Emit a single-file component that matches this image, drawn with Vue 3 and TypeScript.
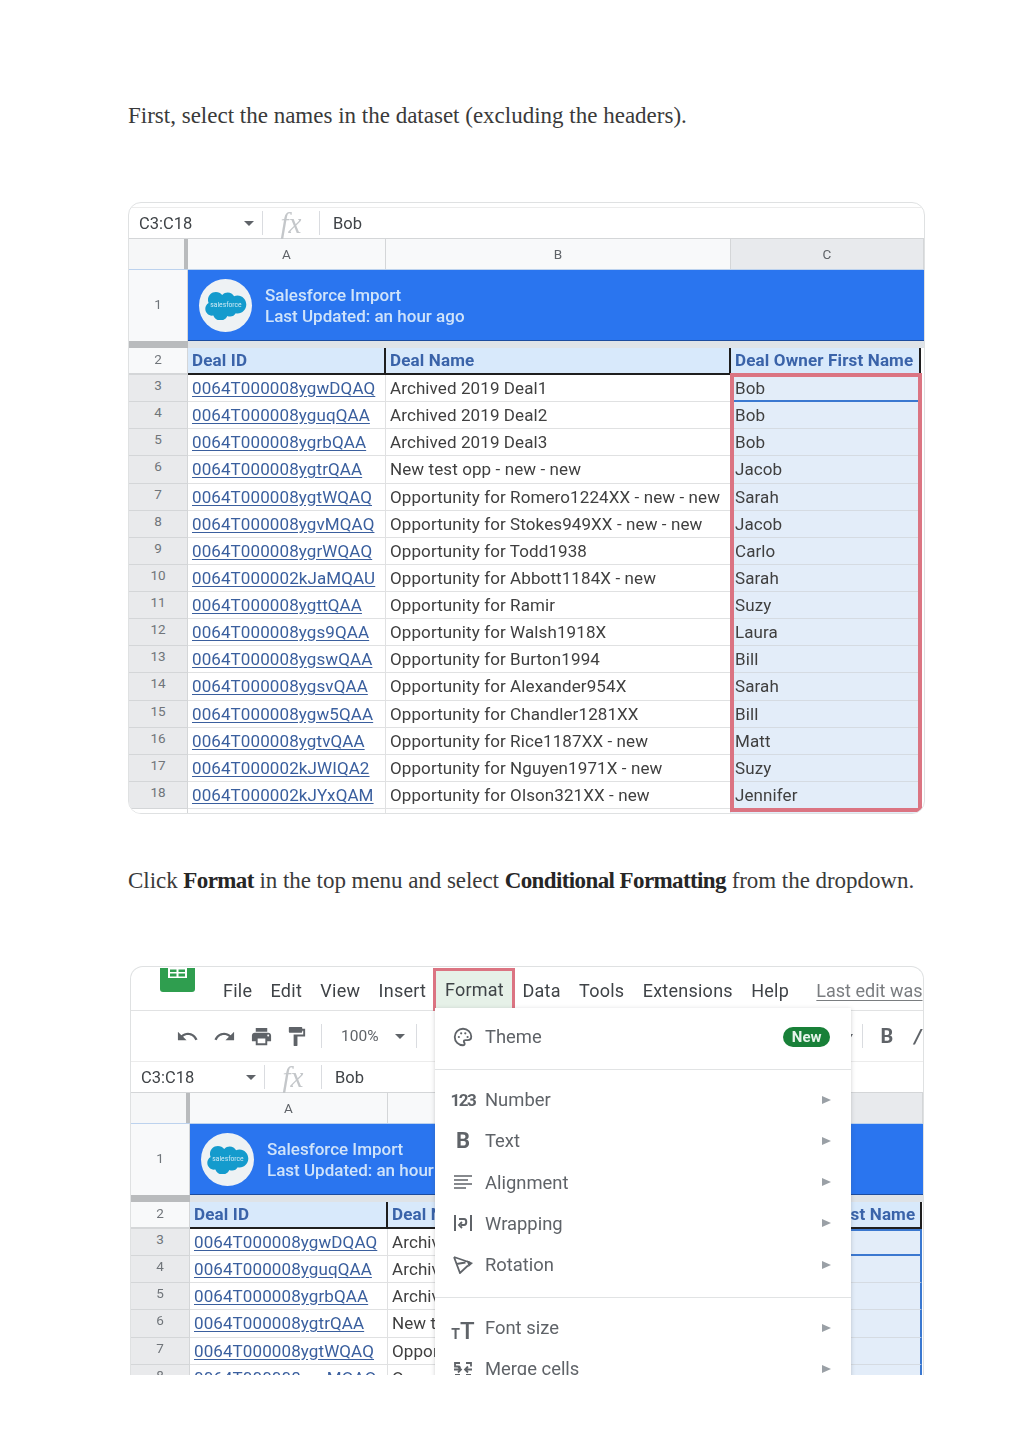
<script setup lang="ts">
interface Row { n: number; id: string; name: string; owner: string }
interface Seg { t: string; b?: boolean }
interface Section { key: string; copy: Seg[]; rows: Row[]; app: boolean }
interface MenuItem { label: string; icon: string; sepBefore?: boolean; arrow: boolean; badge?: string }

const raw: [string, string, string][] = [
  ['0064T000008ygwDQAQ', 'Archived 2019 Deal1', 'Bob'],
  ['0064T000008yguqQAA', 'Archived 2019 Deal2', 'Bob'],
  ['0064T000008ygrbQAA', 'Archived 2019 Deal3', 'Bob'],
  ['0064T000008ygtrQAA', 'New test opp - new - new', 'Jacob'],
  ['0064T000008ygtWQAQ', 'Opportunity for Romero1224XX - new - new', 'Sarah'],
  ['0064T000008ygvMQAQ', 'Opportunity for Stokes949XX - new - new', 'Jacob'],
  ['0064T000008ygrWQAQ', 'Opportunity for Todd1938', 'Carlo'],
  ['0064T000002kJaMQAU', 'Opportunity for Abbott1184X - new', 'Sarah'],
  ['0064T000008ygttQAA', 'Opportunity for Ramir', 'Suzy'],
  ['0064T000008ygs9QAA', 'Opportunity for Walsh1918X', 'Laura'],
  ['0064T000008ygswQAA', 'Opportunity for Burton1994', 'Bill'],
  ['0064T000008ygsvQAA', 'Opportunity for Alexander954X', 'Sarah'],
  ['0064T000008ygw5QAA', 'Opportunity for Chandler1281XX', 'Bill'],
  ['0064T000008ygtvQAA', 'Opportunity for Rice1187XX - new', 'Matt'],
  ['0064T000002kJWIQA2', 'Opportunity for Nguyen1971X - new', 'Suzy'],
  ['0064T000002kJYxQAM', 'Opportunity for Olson321XX - new', 'Jennifer'],
]
const allRows: Row[] = raw.map((r, i) => ({ n: i + 3, id: r[0], name: r[1], owner: r[2] }))

const sections: Section[] = [
  {
    key: 'select',
    copy: [{ t: 'First, select the names in the dataset (excluding the headers).' }],
    rows: allRows,
    app: false,
  },
  {
    key: 'format',
    copy: [
      { t: 'Click ' },
      { t: 'Format', b: true },
      { t: ' in the top menu and select ' },
      { t: 'Conditional Formatting', b: true },
      { t: ' from the dropdown.' },
    ],
    rows: allRows.slice(0, 6),
    app: true,
  },
]

const menuNames = ['File', 'Edit', 'View', 'Insert']
const menuNamesAfter = ['Data', 'Tools', 'Extensions', 'Help']

const menuItems: MenuItem[] = [
  { label: 'Theme', icon: 'palette', arrow: false, badge: 'New' },
  { label: 'Number', icon: 'num', arrow: true, sepBefore: true },
  { label: 'Text', icon: 'bold', arrow: true },
  { label: 'Alignment', icon: 'align', arrow: true },
  { label: 'Wrapping', icon: 'wrap', arrow: true },
  { label: 'Rotation', icon: 'rotate', arrow: true },
  { label: 'Font size', icon: 'size', arrow: true, sepBefore: true },
  { label: 'Merge cells', icon: 'merge', arrow: true },
]
</script>

<template>
  <main class="article">
    <section v-for="s in sections" :key="s.key" class="step" :class="'step-' + s.key">
      <p class="copy">
        <template v-for="(seg, i) in s.copy" :key="i">
          <strong v-if="seg.b">{{ seg.t }}</strong>
          <template v-else>{{ seg.t }}</template>
        </template>
      </p>

      <div class="card" :class="s.app ? 'card-app' : 'card-plain'">
        <template v-if="s.app">
          <div class="menubar">
            <div class="sheets-logo">
              <svg width="35" height="24" viewBox="0 0 35 24">
                <rect x="0" y="-8" width="35" height="32" rx="3" fill="#2f9e4f" />
                <path d="M8 0h19v10H8z" fill="#fff" />
                <path d="M10 1.500h6.500v2.500H10zM18.500 1.500H25v2.500h-6.500zM10 5.500h6.500v3H10zM18.500 5.500H25v3h-6.500z" fill="#2f9e4f" />
              </svg>
            </div>
            <span v-for="m in menuNames" :key="m" class="menu-name">{{ m }}</span>
            <span class="menu-name menu-active">Format</span>
            <span v-for="m in menuNamesAfter" :key="m" class="menu-name">{{ m }}</span>
            <span class="last-edit">Last edit was</span>
          </div>
          <div class="toolbar">
            <svg class="tool" viewBox="0 0 24 24"><path d="M12.5 8c-2.65 0-5.05.99-6.9 2.6L2 7v9h9l-3.62-3.62c1.39-1.16 3.16-1.88 5.12-1.88 3.54 0 6.55 2.31 7.6 5.5l2.37-.78C21.08 11.03 17.15 8 12.5 8z" /></svg>
            <svg class="tool" viewBox="0 0 24 24"><path d="M18.4 10.6C16.55 8.99 14.15 8 11.5 8c-4.65 0-8.58 3.03-9.96 7.22L3.9 16c1.05-3.19 4.05-5.5 7.6-5.5 1.95 0 3.73.72 5.12 1.88L13 16h9V7l-3.6 3.6z" /></svg>
            <svg class="tool" viewBox="0 0 24 24"><path d="M19 8H5c-1.66 0-3 1.34-3 3v6h4v4h12v-4h4v-6c0-1.66-1.34-3-3-3zm-3 11H8v-5h8v5zm3-7c-.55 0-1-.45-1-1s.45-1 1-1 1 .45 1 1-.45 1-1 1zm-1-9H6v4h12V3z" /></svg>
            <svg class="tool tool-paint" viewBox="0 0 24 24"><path d="M18 4V3c0-.55-.45-1-1-1H5c-.55 0-1 .45-1 1v4c0 .55.45 1 1 1h12c.55 0 1-.45 1-1V6h1v4H9v11c0 .55.45 1 1 1h2c.55 0 1-.45 1-1v-9h8V4h-3z" /></svg>
            <i class="vsep tool-sep-a"></i>
            <span class="zoom-level">100%</span>
            <i class="caret zoom-caret"></i>
            <i class="vsep tool-sep-b"></i>
            <i class="caret tail-caret"></i>
            <i class="vsep tool-sep-c"></i>
            <b class="tool-bold">B</b>
            <span class="tool-italic">/</span>
          </div>
        </template>

        <div class="formula">
          <span class="range">C3:C18</span>
          <i class="caret range-caret"></i>
          <i class="vsep"></i>
          <span class="fx">fx</span>
          <i class="vsep"></i>
          <span class="value">Bob</span>
        </div>

        <div class="grid-row col-heads">
          <div class="corner"></div>
          <div class="col-head">A</div>
          <div class="col-head">B</div>
          <div class="col-head col-selected">C</div>
        </div>

        <div class="grid-row banner-row">
          <div class="row-num num-plain banner-num">1</div>
          <div class="banner">
            <div class="logo">
              <svg width="42" height="29" viewBox="0 0 40 28">
                <path d="M16.600 3.600c1.300-1.400 3.100-2.200 5.100-2.200 2.600 0 4.900 1.500 6.100 3.600 1-.4 2.100-.7 3.300-.7 4.700 0 8.500 3.900 8.500 8.700s-3.800 8.700-8.500 8.700c-.6 0-1.100-.1-1.700-.2-1 1.900-3.100 3.200-5.400 3.200-1 0-1.900-.2-2.700-.6-1.100 2.600-3.700 4.400-6.700 4.400-3.100 0-5.800-2-6.800-4.800-.4.100-.9.100-1.400.1-3.600 0-6.400-2.900-6.400-6.600 0-2.400 1.300-4.600 3.200-5.700-.4-.9-.6-1.900-.6-3 0-4.200 3.400-7.600 7.600-7.600 2.500 0 4.700 1.200 6.100 3z" fill="#149bcd" />
                <text x="20" y="15.500" text-anchor="middle" class="logo-text">salesforce</text>
              </svg>
            </div>
            <div class="banner-text">
              <div>Salesforce Import</div>
              <div>Last Updated: an hour ago</div>
            </div>
          </div>
        </div>

        <div class="grid-row freeze">
          <div class="freeze-num"></div>
          <div class="freeze-body"></div>
        </div>

        <div class="grid-row head-row">
          <div class="row-num num-plain">2</div>
          <div class="head-cell">Deal ID</div>
          <div class="head-cell">Deal Name</div>
          <div class="head-cell head-last">Deal Owner First Name</div>
        </div>

        <div class="table-body">
          <div v-for="r in s.rows" :key="r.n" class="grid-row data-row">
            <div class="row-num">{{ r.n }}</div>
            <div class="cell"><span class="link">{{ r.id }}</span></div>
            <div class="cell">{{ r.name }}</div>
            <div class="cell cell-owner" :class="{ 'cell-first': r.n === 3 }">{{ s.app ? '' : r.owner }}</div>
          </div>
          <div v-if="!s.app" class="grid-row tail-row">
            <div class="row-num"></div>
            <div class="cell"></div>
            <div class="cell"></div>
            <div class="cell cell-owner"></div>
          </div>
          <div v-if="!s.app" class="selection"></div>
        </div>

        <div v-if="s.app" class="format-menu">
          <template v-for="item in menuItems" :key="item.label">
            <div v-if="item.sepBefore" class="menu-sep"></div>
            <div class="menu-item">
              <span class="menu-icon">
                <svg v-if="item.icon === 'palette'" width="22" height="22" viewBox="0 0 24 24" fill="none" stroke="#5f6368" stroke-width="2">
                  <path d="M12 3c-5 0-9 4-9 9s4 9 9 9c1.100 0 1.800-.8 1.800-1.700 0-1-.9-1.300-.9-2.300 0-1 .8-1.600 1.800-1.600H17c2.300 0 4-1.700 4-4 0-4.500-4-8.400-9-8.400z" />
                  <circle cx="7.500" cy="12" r="1.200" fill="#5f6368" stroke="none" />
                  <circle cx="10" cy="8" r="1.200" fill="#5f6368" stroke="none" />
                  <circle cx="14.500" cy="8" r="1.200" fill="#5f6368" stroke="none" />
                  <circle cx="17" cy="12" r="1.200" fill="#5f6368" stroke="none" />
                </svg>
                <span v-else-if="item.icon === 'num'" class="icon-num">123</span>
                <span v-else-if="item.icon === 'bold'" class="icon-bold">B</span>
                <svg v-else-if="item.icon === 'align'" width="20" height="16" viewBox="0 0 20 16" stroke="#5f6368" stroke-width="1.700">
                  <path d="M1 2h18M1 6h14M1 10h18M1 14h12" />
                </svg>
                <svg v-else-if="item.icon === 'wrap'" width="20" height="18" viewBox="0 0 20 18" fill="none" stroke="#5f6368" stroke-width="2">
                  <path d="M2 1v16M18 1v16M6 5h5c3 0 3 6 0 6H8" />
                  <path d="M9 8l-3 3 3 3" stroke-width="1.800" />
                </svg>
                <svg v-else-if="item.icon === 'rotate'" width="20" height="18" viewBox="0 0 20 18" fill="none" stroke="#5f6368" stroke-width="1.800">
                  <path d="M1 1l16 5.500M1 1l6 16 8-7.500M3.500 8l9-1.500" />
                  <path d="M14 4.500l6 2.500-4.500 4z" fill="#5f6368" stroke="none" />
                </svg>
                <span v-else-if="item.icon === 'size'" class="icon-size"><small>T</small>T</span>
                <svg v-else width="20" height="14" viewBox="0 0 20 14" fill="none" stroke="#5f6368" stroke-width="1.800">
                  <path d="M7 1H2v3.500h3.500c1.500 0 1.500 1 1.500 2.500M1 7.500h7M5 4.500l3 3-3 3M2 13h5" />
                  <path d="M13 1h5v3.500M19 7.500h-7M15 4.500l-3 3 3 3M18 13h-5" />
                </svg>
              </span>
              <span class="menu-label">{{ item.label }}</span>
              <span v-if="item.badge" class="badge">{{ item.badge }}</span>
              <i v-if="item.arrow" class="menu-arrow"></i>
            </div>
          </template>
        </div>
      </div>
    </section>
  </main>
</template>

<style>
html, body { margin: 0; background: #fff; }
</style>

<style scoped>
.article {
  box-sizing: border-box;
  width: 1024px;
  height: 1449px;
  padding: 100px 0 0 128px;
  overflow: hidden;
}
.copy {
  margin: 0;
  width: 800px;
  font: 400 23px/32px "Liberation Serif", serif;
  color: #3a3a3a;
  white-space: nowrap;
}
.copy strong { font-weight: 700; color: #262626; letter-spacing: -0.6px; }
.step-format { margin-top: 51px; }
.step-format .copy { letter-spacing: -0.05px; }
.card {
  position: relative;
  box-sizing: border-box;
  margin-top: 70px;
  border: 1px solid #dfe1e2;
  border-radius: 13px;
  overflow: hidden;
  font-family: Roboto, "Liberation Sans", sans-serif;
  background: #fff;
  color: #3c3c3c;
  filter: blur(0.4px);
}
.card-plain { width: 797px; height: 612px; padding-top: 4px; }
.card-app {
  width: 794px;
  height: 409px;
  margin-top: 69px;
  margin-left: 2px;
  border-bottom: 0;
  border-radius: 13px 13px 0 0;
}

/* shared sheet grid */
.grid-row { display: grid; grid-template-columns: 59px 198px 345px 1fr; }

.formula {
  display: flex;
  align-items: center;
  height: 30px;
  border-top: 1px solid #ececec;
  border-bottom: 1px solid #d4d6d8;
  font-size: 16.500px;
  box-sizing: content-box;
}
.range { margin-left: 10px; width: 105px; color: #3f4347; }
.caret {
  display: block;
  width: 0;
  height: 0;
  border-left: 5px solid transparent;
  border-right: 5px solid transparent;
  border-top: 5px solid #5f6368;
}
.range-caret { margin-right: 8px; }
.vsep { display: block; width: 1px; height: 24px; background: #dadce0; }
.fx {
  width: 56px;
  text-align: center;
  font: italic 400 29px/1 "Liberation Serif", serif;
  color: #c4c7ca;
}
.value { margin-left: 13px; color: #3f4347; }

.col-heads { height: 31px; box-sizing: border-box; border-bottom: 1px solid #bcd2ee; }
.corner { background: #f6f7f8; border-right: 4px solid #b9bbbd; }
.col-head {
  display: flex;
  align-items: center;
  justify-content: center;
  padding-bottom: 1px;
  background: #f8f9fa;
  border-right: 1px solid #d4d6d8;
  font-size: 13.500px;
  color: #5f6368;
}
.col-selected { background: #e8eaed; }

.banner-row { height: 71px; }
.banner {
  grid-column: 2 / 5;
  display: flex;
  align-items: center;
  background: #2a75ef;
  border-bottom: 1px solid #1d4c9e;
  padding-left: 11px;
  color: #cfe3fa;
}
.logo {
  display: flex;
  align-items: center;
  justify-content: center;
  width: 53px;
  height: 53px;
  border-radius: 50%;
  background: #eef2f4;
}
.logo-text { font: 400 6.500px Roboto, sans-serif; fill: #cfeaf5; }
.banner-text { margin-left: 13px; padding-top: 2px; font-size: 17px; line-height: 21px; font-weight: 500; }

.row-num {
  display: flex;
  align-items: center;
  justify-content: center;
  padding-bottom: 6px;
  box-sizing: border-box;
  background: #e9eaec;
  border-right: 1px solid #d4d6d8;
  border-bottom: 1px solid #d4d6d8;
  font-size: 13.500px;
  color: #70757a;
}
.num-plain { background: #f8f9fa; border-bottom: 0; }
.banner-num { padding-bottom: 3px; }

.freeze { height: 7px; grid-template-columns: 59px 1fr; }
.freeze-num { background: #b9bbbd; }
.freeze-body { background: #dfe3e7; }

.head-row { height: 27px; box-sizing: border-box; }
.head-row .row-num { border-bottom: 2px solid #d4d6d8; padding-bottom: 4px; }
.head-cell {
  display: flex;
  align-items: center;
  padding-left: 4px;
  padding-bottom: 2px;
  background: #d8e9fb;
  border-right: 2px solid #1e1e1e;
  border-bottom: 2px solid #1e1e1e;
  font-size: 17px;
  font-weight: 700;
  letter-spacing: 0.15px;
  color: #3a63a9;
  white-space: nowrap;
  overflow: hidden;
}
.head-last { margin-right: 3px; }
.card-app .head-last { margin-right: 1px; }

.table-body { position: relative; }
.data-row { height: 27.130px; box-sizing: border-box; }
.cell {
  display: flex;
  align-items: center;
  box-sizing: border-box;
  padding-left: 4px;
  border-right: 1px solid #e0e1e2;
  border-bottom: 1px solid #e0e1e2;
  font-size: 17px;
  letter-spacing: 0.1px;
  white-space: nowrap;
  overflow: hidden;
  color: #3f3f3f;
}
.cell-owner { background: #e3edf9; border-color: #d5dbe2; margin-right: 3px; }
.link { color: #3a5f9e; text-decoration: underline; text-underline-offset: 2px; }
.tail-row { height: 7px; }
.tail-row .row-num, .tail-row .cell { border-bottom: 0; }
.tail-row .row-num { background: #fff; padding: 0; }
.card-plain .cell-first { border-bottom: 2px solid #3b78d0; }
.selection {
  position: absolute;
  left: 601px;
  top: -2px;
  width: 192px;
  height: 439px;
  box-sizing: border-box;
  border: 4px solid #db7482;
  pointer-events: none;
}
.card-app .cell-owner { background: #e3edf9; border-right: 2px solid #3b78d0; margin-right: 1px; }
.card-app .cell-first { border: 2px solid #3b78d0; }

/* app chrome */
.menubar {
  display: flex;
  align-items: center;
  height: 44px;
  box-sizing: border-box;
  padding: 4px 0 0 92px;
  border-bottom: 1px solid #e1e2e3;
  font-size: 18px;
  letter-spacing: 0.25px;
  color: #3f4347;
  position: relative;
  white-space: nowrap;
}
.sheets-logo { position: absolute; left: 29px; top: 1px; height: 24px; line-height: 0; }
.menu-name { margin-right: 18.300px; }
.menu-active {
  box-sizing: border-box;
  height: 43px;
  width: 82px;
  margin: -3px 7px 0 -11px;
  display: flex;
  align-items: center;
  justify-content: center;
  border: 3px solid #db7482;
  background: #e6f1e8;
}
.last-edit { margin-left: 9px; color: #7a7d80; letter-spacing: 0; text-decoration: underline; text-underline-offset: 3px; }
.toolbar {
  display: flex;
  align-items: center;
  height: 50px;
  box-sizing: border-box;
  padding-left: 45px;
  white-space: nowrap;
}
.tool { width: 23px; height: 23px; margin-right: 14px; fill: #5f6368; flex: none; }
.tool-paint { margin-left: -2px; margin-right: 13px; }
.tool-sep-a { margin: 0; }
.zoom-level { margin-left: 19px; font-size: 15.500px; letter-spacing: 0; color: #5f6368; }
.zoom-caret { margin-left: 16px; }
.tool-sep-b { margin-left: 11px; }
.tail-caret { margin-left: 430px; border-left-width: 3px; border-right-width: 3px; }
.tool-sep-c { margin-left: 9px; }
.tool-bold { margin-left: 18px; font-size: 20px; color: #5f6368; }
.tool-italic { margin-left: 21px; font: italic 700 20px Roboto, sans-serif; color: #5f6368; }

.format-menu {
  position: absolute;
  left: 304px;
  top: 41px;
  width: 416px;
  height: 380px;
  background: #fff;
  box-shadow: 0 1px 4px rgba(60, 64, 67, 0.25);
  padding-top: 8px;
  box-sizing: border-box;
}
.menu-item {
  display: flex;
  align-items: center;
  height: 41.200px;
  font-size: 18.400px;
  color: #5f6368;
  position: relative;
}
.menu-icon {
  display: flex;
  align-items: center;
  justify-content: center;
  width: 28px;
  margin-left: 14px;
  margin-right: 8px;
  height: 24px;
}
.menu-label { flex: 1; }
.icon-num { font-size: 17px; font-weight: 700; letter-spacing: -1.500px; color: #5f6368; }
.icon-bold { font-size: 22px; font-weight: 700; color: #5f6368; }
.icon-size { font-size: 24px; font-weight: 500; line-height: 1; color: #5f6368; margin-top: 6px; }
.icon-size small { font-size: 14px; font-weight: 700; }
.badge {
  margin-right: 21px;
  padding: 0 8.500px;
  height: 20px;
  line-height: 20px;
  border-radius: 10px;
  background: #188038;
  color: #e6f4ea;
  font-size: 15px;
  font-weight: 700;
}
.menu-arrow {
  width: 0;
  height: 0;
  margin-right: 20px;
  border-top: 4.500px solid transparent;
  border-bottom: 4.500px solid transparent;
  border-left: 9px solid #9aa0a6;
}
.menu-sep { height: 1px; background: #e1e3e4; margin: 12px 0 9px; }
</style>
